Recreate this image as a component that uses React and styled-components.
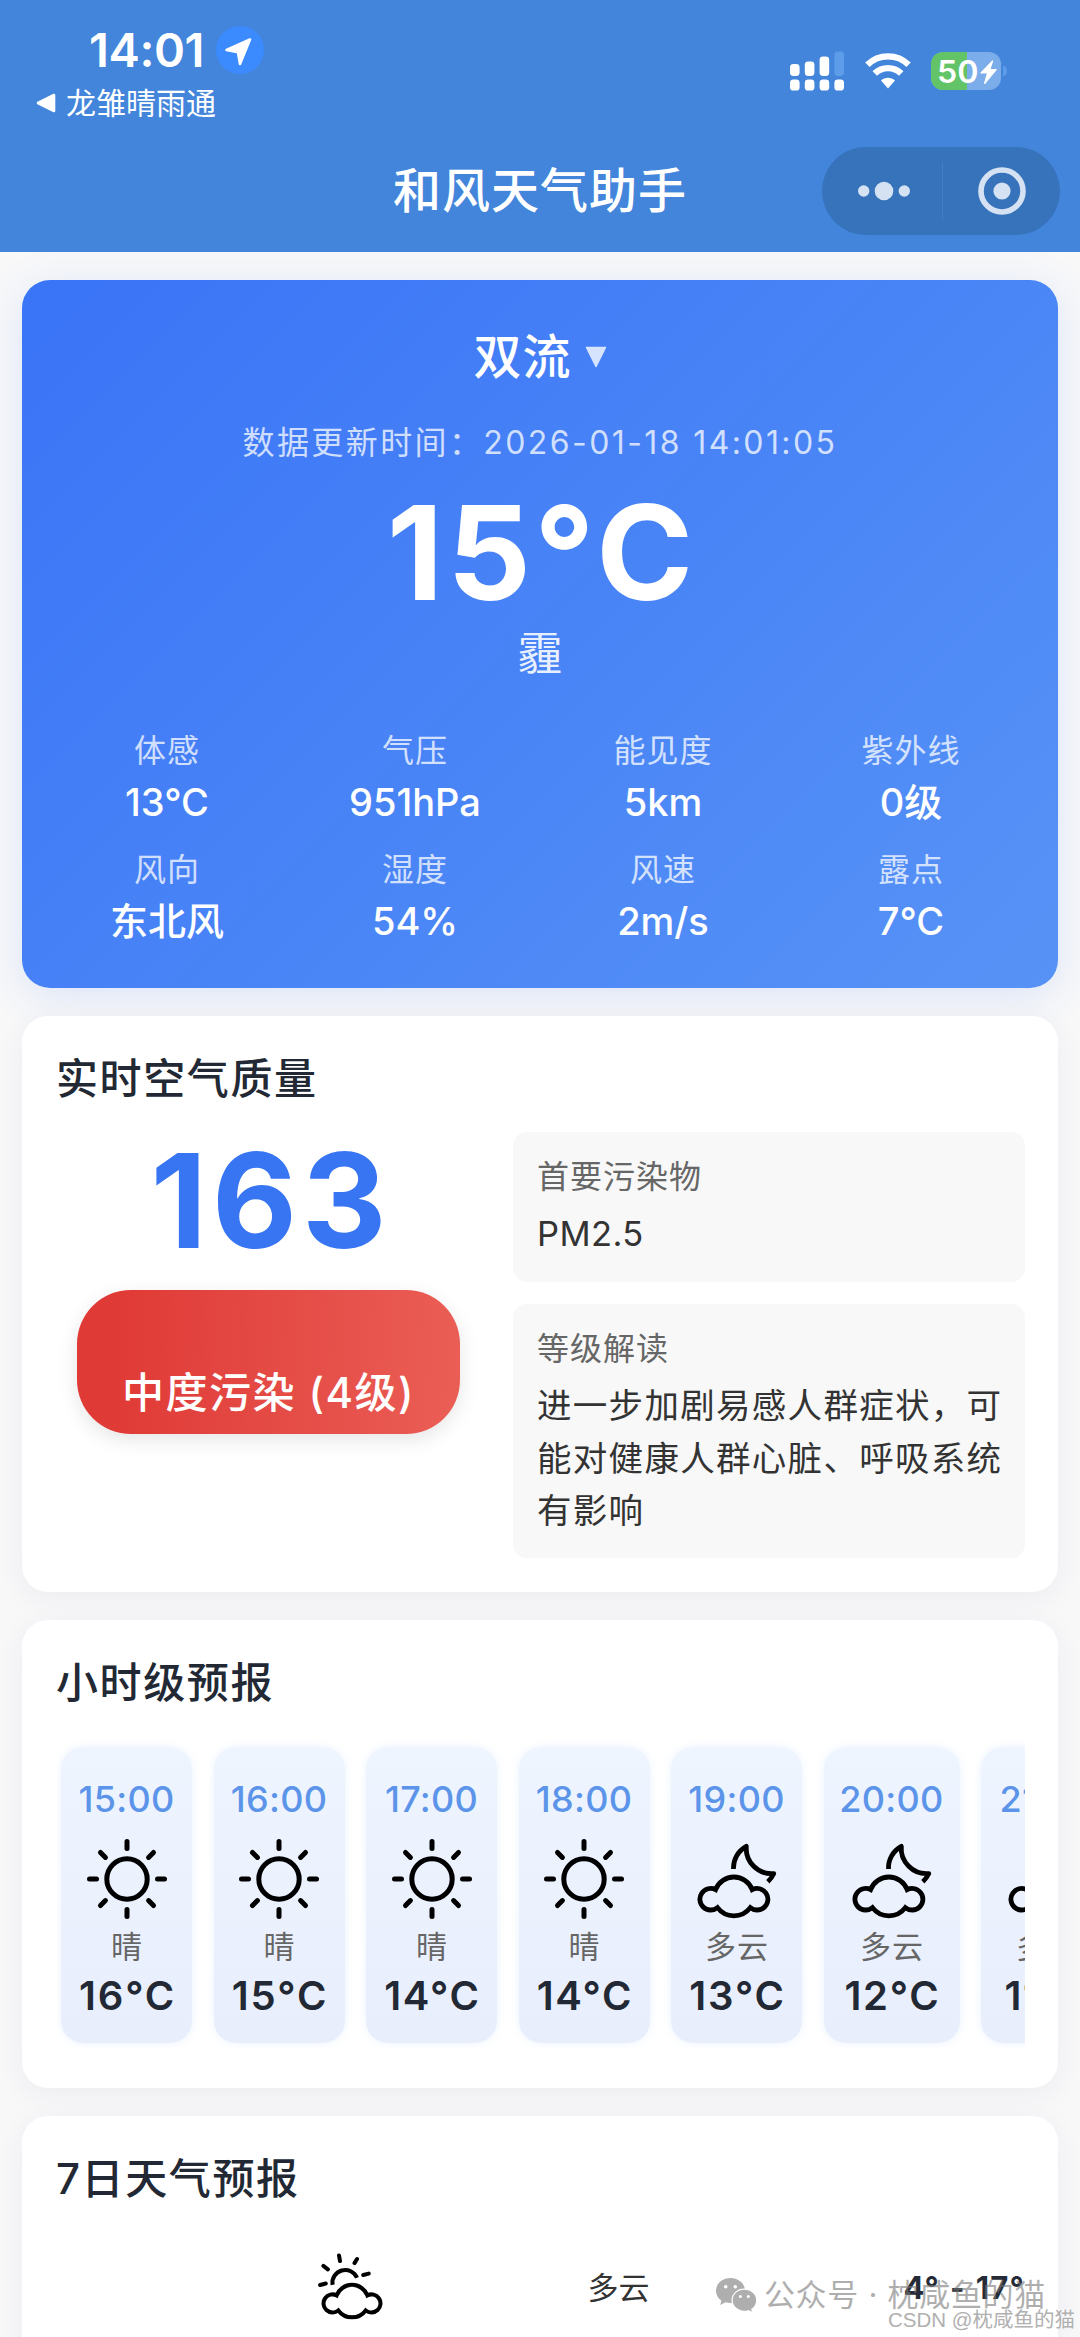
import styled, { createGlobalStyle } from 'styled-components';

const GlobalStyle = createGlobalStyle`
  *{
    box-sizing:border-box;
  }
  body{
    margin:0;
    background-color:#f8f8f9;
    font-family:Inter, "Noto Sans CJK SC", sans-serif;
  }
`

const Page = styled.div`
  position:relative;
  height:2337px;
  overflow:hidden;
  background-color:#f8f8f9;
`

// header

const Header = styled.header`
  height:252px;
  display:flex;
  flex-direction:column;
  color:white;
  background-color:#4285db;
`

const StatusBar = styled.div`
  height:147px;
  display:flex;
  justify-content:space-between;
  padding:24px 73px 0 36px;
`

const StatusLeft = styled.div`
  display:flex;
  flex-direction:column;
`

const Clock = styled.div`
  display:flex;
  align-items:center;
  gap:12px;
  height:51px;
  padding-left:53px;
  font-size:47px;
  font-weight:600;
  line-height:51px;
  letter-spacing:-0.4px;
`

const BackLink = styled.div`
  display:flex;
  align-items:center;
  gap:10px;
  margin-top:8px;
  font-size:30px;
  line-height:40px;
`

const StatusIcons = styled.div`
  display:flex;
  align-items:center;
  gap:20px;
  height:94px;
`

const NavBar = styled.div`
  display:grid;
  grid-template-columns:1fr auto 1fr;
  align-items:center;
  height:88px;
  padding:0 20px;
`

const NavTitle = styled.h1`
  grid-column:2;
  margin:0;
  font-size:48px;
  font-weight:500;
  line-height:64px;
  letter-spacing:1px;
`

const Capsule = styled.div`
  justify-self:end;
  display:flex;
  align-items:center;
  width:238px;
  height:88px;
  padding-left:3px;
  border-radius:44px;
  background-color:#3673ba;
`

const CapsuleHalf = styled.div`
  flex:1;
  display:flex;
  justify-content:center;
  align-items:center;
`

const CapsuleDivider = styled.div`
  width:1px;
  height:58px;
  background-color:#427dc4;
`

// cards

const Main = styled.main`
  display:flex;
  flex-direction:column;
  gap:28px;
  padding:28px 22px 0;
`

const NowCard = styled.section`
  height:708px;
  padding:47px 21px 0;
  border-radius:28px;
  color:white;
  text-align:center;
  background:linear-gradient(135deg, #3a74f7 0%, #5793f6 100%);
  box-shadow:0 8px 40px rgba(66,125,240,0.16);
`

const City = styled.div`
  display:flex;
  justify-content:center;
  align-items:center;
  gap:13px;
  font-size:48px;
  font-weight:500;
  line-height:60px;
  letter-spacing:1px;
`

const UpdateTime = styled.div`
  margin-top:34px;
  font-size:32px;
  line-height:44px;
  letter-spacing:2.4px;
  color:rgba(255,255,255,0.75);
`

const NowTemp = styled.div`
  margin-top:28px;
  margin-right:-4px;
  font-size:131px;
  font-weight:700;
  line-height:120px;
  letter-spacing:4px;
`

const NowText = styled.div`
  margin-top:13px;
  font-size:45px;
  line-height:56px;
  color:rgba(255,255,255,0.9);
`

const Metrics = styled.div`
  display:grid;
  grid-template-columns:repeat(4, 248px);
  row-gap:24px;
  margin-top:49px;
`

const MetricLabel = styled.div`
  font-size:32px;
  line-height:40px;
  letter-spacing:1px;
  color:rgba(255,255,255,0.75);
`

const MetricValue = styled.div`
  margin-top:7px;
  font-size:38px;
  font-weight:500;
  line-height:48px;
`

const Card = styled.section`
  height:${props => props.$height}px;
  padding:37px 33px 0 35px;
  border-radius:26px;
  background-color:white;
  box-shadow:0 6px 28px rgba(50,50,110,0.06);
`

const CardTitle = styled.h2`
  margin:0 0 0 -1px;
  font-size:42px;
  font-weight:500;
  line-height:52px;
  letter-spacing:1.6px;
  color:#222934;
`

const AirBody = styled.div`
  display:flex;
  justify-content:space-between;
  margin-top:27px;
`

const AirLeft = styled.div`
  width:423px;
  display:flex;
  flex-direction:column;
  align-items:center;
`

const Aqi = styled.div`
  margin-top:4px;
  margin-right:-5px;
  font-size:131px;
  font-weight:700;
  line-height:130px;
  letter-spacing:5px;
  color:#3875f3;
`

const AqiBadge = styled.div`
  display:flex;
  justify-content:center;
  align-items:flex-end;
  width:383px;
  height:144px;
  margin-top:24px;
  padding-bottom:15px;
  border-radius:54px;
  font-size:42px;
  font-weight:500;
  line-height:52px;
  letter-spacing:1.5px;
  color:white;
  background:linear-gradient(92deg, #e03a36 10%, #ea5e56 100%);
  box-shadow:0 6px 20px rgba(0,0,0,0.1);
`

const AirRight = styled.div`
  width:512px;
  display:flex;
  flex-direction:column;
  gap:22px;
`

const InfoBox = styled.div`
  height:${props => props.$height}px;
  padding:25px 24px;
  border-radius:14px;
  background-color:#f8f8f8;
`

const InfoLabel = styled.div`
  font-size:32px;
  line-height:40px;
  letter-spacing:1px;
  color:#666;
`

const InfoText = styled.div`
  width:470px;
  margin-top:11px;
  font-size:34.5px;
  line-height:52.5px;
  letter-spacing:${props => props.$spacing}px;
  color:#333;
`

const HourList = styled.div`
  display:flex;
  gap:21.5px;
  margin-top:28px;
  padding:10px 0 10px 4px;
  overflow:hidden;
`

const HourCard = styled.div`
  flex:none;
  display:flex;
  flex-direction:column;
  align-items:center;
  width:${props => props.$width}px;
  height:296px;
  padding-top:30px;
  border-radius:22px;
  background:linear-gradient(180deg, #eef5ff 0%, #e8eefc 100%);
  box-shadow:0 0 8px rgba(220,235,255,0.6);
`

const HourTime = styled.div`
  margin-bottom:18px;
  font-size:36px;
  font-weight:450;
  line-height:44px;
  letter-spacing:0.3px;
  color:#5c94e9;
`

const HourText = styled.div`
  margin-top:8px;
  font-size:31px;
  line-height:40px;
  letter-spacing:1px;
  margin-right:-1px;
  color:#666;
`

const HourTemp = styled.div`
  margin-top:5px;
  margin-right:-2px;
  font-size:40px;
  font-weight:600;
  line-height:48px;
  letter-spacing:1.8px;
  color:#222934;
`

const DayRow = styled.div`
  display:flex;
  align-items:center;
  height:67px;
  margin-top:48px;
`

const DayDate = styled.div`
  width:194px;
`

const DayIcon = styled.div`
  width:200px;
  height:67px;
  text-align:center;
`

const DayText = styled.div`
  width:335px;
  font-size:31px;
  line-height:38px;
  padding-top:2px;
  text-align:center;
  color:#333;
`

const DayTemp = styled.div`
  flex:1;
  padding-top:2px;
  font-size:31px;
  font-weight:650;
  line-height:38px;
  letter-spacing:1.2px;
  word-spacing:1.5px;
  text-align:right;
  color:#252b36;
`

// account name and site mark laid over the page's bottom right corner

const AccountMark = styled.div`
  position:absolute;
  right:34px;
  bottom:22px;
  display:flex;
  align-items:center;
  gap:7px;
  font-size:31px;
  line-height:40px;
  letter-spacing:0.7px;
  white-space:pre;
  color:rgba(120,120,120,0.6);
`

const SiteMark = styled.div`
  position:absolute;
  right:5px;
  bottom:4px;
  font-family:"Liberation Sans", "Noto Sans CJK SC", sans-serif;
  font-size:20.5px;
  line-height:26px;
  color:#b0b0b0;
  text-shadow:-1px -1px 0 white;
`

const metrics = [
  { label: '体感', value: '13°C' },
  { label: '气压', value: '951hPa' },
  { label: '能见度', value: '5km' },
  { label: '紫外线', value: '0级' },
  { label: '风向', value: '东北风' },
  { label: '湿度', value: '54%' },
  { label: '风速', value: '2m/s' },
  { label: '露点', value: '7°C' },
]

const hours = [
  { time: '15:00', text: '晴', temp: '16°C', width: 131 },
  { time: '16:00', text: '晴', temp: '15°C', width: 131 },
  { time: '17:00', text: '晴', temp: '14°C', width: 131 },
  { time: '18:00', text: '晴', temp: '14°C', width: 131 },
  { time: '19:00', text: '多云', temp: '13°C', width: 131 },
  { time: '20:00', text: '多云', temp: '12°C', width: 136 },
  { time: '21:00', text: '多云', temp: '11°C', width: 133 },
]

const CLOUD = 'M18.6 50.6 A10.8 10.8 0 1 0 20.5 68.6 A20.5 20.5 0 0 0 53.3 68.6 A10.8 10.8 0 1 0 55.2 50.6 A19.6 19.6 0 0 0 18.6 50.6 Z'

const SunIcon = () => (
  <svg width="80" height="80" viewBox="0 0 80 80" fill="none" stroke="#000" strokeWidth="5" strokeLinecap="round">
    <circle cx="40" cy="40" r="20.2" />
    {[0, 45, 90, 135, 180, 225, 270, 315].map(a => (
      <path key={a} d="M40 2.5v7" transform={`rotate(${a} 40 40)`} />
    ))}
  </svg>
)

const CloudMoonIcon = () => (
  <svg width="80" height="80" viewBox="0 0 80 80" fill="none" stroke="#000" strokeWidth="4.8">
    <path d={CLOUD} />
    <path d="M36.500 30 A24.500 24.500 0 0 1 49.300 7.300 A25.400 25.400 0 0 0 76.800 34.600 Q74.500 39.500 70.800 42.800" strokeLinejoin="round" />
  </svg>
)

const CloudSunIcon = () => (
  <svg width="67" height="67" viewBox="0 0 80 80" fill="none" stroke="#000" strokeWidth="4.8">
    <path d={CLOUD} transform="translate(3.7 0)" />
    <path d="M17.4 38 A15.3 15.3 0 0 1 46.6 29.6" />
    <path strokeLinecap="round" d="M25.1 3l1.2 6.6M46.6 7.2l-3 4.9M60.6 24.6l-6.6 1.7M6.4 15.4l5.4 4.1M2.5 38.2l6.8-1.8" />
  </svg>
)

const LocationIcon = () => (
  <svg width="48" height="48" viewBox="0 0 48 48">
    <circle cx="24" cy="24" r="24" fill="#3b8bff" />
    <path d="M34 13.5L10.5 24l11.5 2.2L24 38z" fill="#fff" stroke="#fff" strokeWidth="2.6" strokeLinejoin="round" />
  </svg>
)

const SignalIcon = () => (
  <svg width="55" height="40" viewBox="0 0 55 40" fill="#fff">
    <rect x="0" y="13" width="9.6" height="12" rx="3.4" />
    <rect x="14.8" y="10.4" width="9.6" height="14.6" rx="3.4" />
    <rect x="29.6" y="5.6" width="9.6" height="19.4" rx="3.4" />
    <rect x="44.4" y="0.6" width="9.6" height="24.4" rx="3.4" fill="#5c9ce8" />
    <rect x="0" y="28.6" width="9.6" height="11" rx="3.4" />
    <rect x="14.8" y="28.6" width="9.6" height="11" rx="3.4" />
    <rect x="29.6" y="28.6" width="9.6" height="11" rx="3.4" />
    <rect x="44.4" y="28.6" width="9.6" height="11" rx="3.4" />
  </svg>
)

const WifiIcon = () => (
  <svg width="46" height="36" viewBox="0 0 46 36" fill="none" stroke="#fff" strokeWidth="6.4">
    <path d="M2.4 11.8A29.5 29.5 0 0 1 43.6 11.8" />
    <path d="M9.8 20.6A18.6 18.6 0 0 1 36.2 20.6" />
    <path d="M16 27.6C20 23.8 26 23.8 30 27.6L23 35.4z" fill="#fff" stroke="none" />
  </svg>
)

const BatteryIcon = () => (
  <svg width="76" height="38" viewBox="0 0 76 38">
    <defs>
      <clipPath id="level">
        <rect width="36" height="38" />
      </clipPath>
    </defs>
    <rect width="70" height="38" rx="12" fill="#7badea" />
    <rect width="70" height="38" rx="12" fill="#62c466" clipPath="url(#level)" />
    <path d="M72 13.5q4 1.400 4 5.500t-4 5.500z" fill="#5c9ce8" />
    <text x="6" y="30.500" fontSize="31" fontWeight="600" fontFamily="Inter" fill="#fff" textLength="41.500" lengthAdjust="spacingAndGlyphs">50</text>
    <path d="M61.6 9L50 21h6.6L53.6 31.5L65.2 17.6h-6.4z" fill="#fff" stroke="#fff" strokeWidth="1.2" strokeLinejoin="round" />
  </svg>
)

const WechatIcon = () => (
  <svg width="41" height="34" viewBox="0 0 41 34">
    <path d="M14.5 0C6.3 0 0 5.6 0 12.7c0 4.1 2 7.5 5.4 9.900L4.300 27l5.200-2.700c1.600.5 3.200.8 5 .8C22.700 25.100 29 19.600 29 12.700S22.700 0 14.500 0z" fill="#aeaeae" />
    <path d="M28.3 11.2c-6.900 0-12.200 4.900-12.200 11s5.300 11.100 12.200 11.100c1.500 0 2.800-.2 4.100-.6l4.400 2.200-1-3.600c3-2 4.900-5.200 4.900-9.100 0-6.100-5.500-11-12.400-11z" fill="#aeaeae" stroke="#fff" strokeWidth="1.2" />
    <circle cx="9.7" cy="8.7" r="1.8" fill="#fff" />
    <circle cx="19.3" cy="8.7" r="1.8" fill="#fff" />
    <circle cx="24.4" cy="18.6" r="1.5" fill="#fff" />
    <circle cx="32.3" cy="18.6" r="1.5" fill="#fff" />
  </svg>
)

const App = () => {
  return (
    <Page>
      <GlobalStyle />
      <Header>
        <StatusBar>
          <StatusLeft>
            <Clock>
              14:01
              <LocationIcon />
            </Clock>
            <BackLink>
              <svg width="20" height="20" viewBox="0 0 20 20">
                <path d="M2 10L18 2v16z" fill="#fff" stroke="#fff" strokeWidth="2.6" strokeLinejoin="round" />
              </svg>
              龙雏晴雨通
            </BackLink>
          </StatusLeft>
          <StatusIcons>
            <SignalIcon />
            <WifiIcon />
            <BatteryIcon />
          </StatusIcons>
        </StatusBar>
        <NavBar>
          <NavTitle>和风天气助手</NavTitle>
          <Capsule>
            <CapsuleHalf>
              <svg width="52" height="20" viewBox="0 0 52 20" fill="#d5e2f3">
                <circle cx="5.7" cy="10" r="5.7" />
                <circle cx="26" cy="10" r="9.3" />
                <circle cx="46.3" cy="10" r="5.7" />
              </svg>
            </CapsuleHalf>
            <CapsuleDivider />
            <CapsuleHalf>
              <svg width="48" height="48" viewBox="0 0 48 48" fill="none">
                <circle cx="24" cy="24" r="21" stroke="#d5e2f3" strokeWidth="5.6" />
                <circle cx="24" cy="24" r="8.6" fill="#d5e2f3" />
              </svg>
            </CapsuleHalf>
          </Capsule>
        </NavBar>
      </Header>
      <Main>
        <NowCard>
          <City>
            双流
            <svg width="22" height="22" viewBox="0 0 22 22">
              <path d="M1.5 1.5h19L11 20.5z" fill="#d6e4fd" stroke="#d6e4fd" strokeWidth="1.5" strokeLinejoin="round" />
            </svg>
          </City>
          <UpdateTime>数据更新时间：2026-01-18 14:01:05</UpdateTime>
          <NowTemp>15°C</NowTemp>
          <NowText>霾</NowText>
          <Metrics>
            {metrics.map(item => (
              <div key={item.label}>
                <MetricLabel>{item.label}</MetricLabel>
                <MetricValue>{item.value}</MetricValue>
              </div>
            ))}
          </Metrics>
        </NowCard>
        <Card $height={576}>
          <CardTitle>实时空气质量</CardTitle>
          <AirBody>
            <AirLeft>
              <Aqi>163</Aqi>
              <AqiBadge>中度污染 (4级)</AqiBadge>
            </AirLeft>
            <AirRight>
              <InfoBox $height={150}>
                <InfoLabel>首要污染物</InfoLabel>
                <InfoText $spacing={0.4}>PM2.5</InfoText>
              </InfoBox>
              <InfoBox $height={254}>
                <InfoLabel>等级解读</InfoLabel>
                <InfoText $spacing={1.3}>进一步加剧易感人群症状，可能对健康人群心脏、呼吸系统有影响</InfoText>
              </InfoBox>
            </AirRight>
          </AirBody>
        </Card>
        <Card $height={468}>
          <CardTitle>小时级预报</CardTitle>
          <HourList>
            {hours.map(item => (
              <HourCard key={item.time} $width={item.width}>
                <HourTime>{item.time}</HourTime>
                {item.text === '晴' ? <SunIcon /> : <CloudMoonIcon />}
                <HourText>{item.text}</HourText>
                <HourTemp>{item.temp}</HourTemp>
              </HourCard>
            ))}
          </HourList>
        </Card>
        <Card $height={300}>
          <CardTitle>7日天气预报</CardTitle>
          <DayRow>
            <DayDate />
            <DayIcon>
              <CloudSunIcon />
            </DayIcon>
            <DayText>多云</DayText>
            <DayTemp>4° - 17°</DayTemp>
          </DayRow>
        </Card>
      </Main>
      <AccountMark>
        <WechatIcon />
        公众号 · 枕咸鱼的猫
      </AccountMark>
      <SiteMark>CSDN @枕咸鱼的猫</SiteMark>
    </Page>
  )
}

export default App
